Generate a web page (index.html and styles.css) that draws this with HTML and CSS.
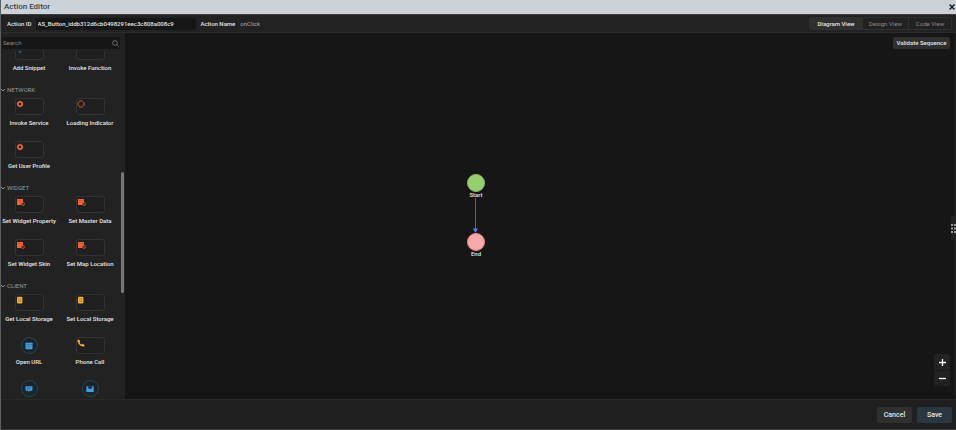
FILE: index.html
```html
<!DOCTYPE html>
<html lang="en">
<head>
<meta charset="utf-8">
<title>Action Editor</title>
<link rel="stylesheet" href="styles.css">
</head>
<body>
<svg class="defs" aria-hidden="true">
  <symbol id="chevron" viewBox="0 0 6 6"><path d="M0 2l2 2 2-2" fill="none" stroke="#999" stroke-width=".9"/></symbol>
  <symbol id="gear" viewBox="0 0 8 8"><circle cx="4" cy="4" r="2.1" fill="none" stroke="#f0693a" stroke-width="1.5"/><circle cx="4" cy="4" r="2.9" fill="none" stroke="#f0693a" stroke-width=".7" stroke-dasharray="1.2 1.08"/></symbol>
  <symbol id="spinner" viewBox="0 0 8 8"><circle cx="4" cy="4" r="3.1" fill="none" stroke="#e2602f" stroke-width="1" stroke-dasharray="2 .43"/></symbol>
  <symbol id="widget" viewBox="0 0 9 8"><path d="M1 1h6v6H1z" fill="#f0632f"/><path d="M1 2.500h6" stroke="#b94b25" stroke-width=".4"/><circle cx="7" cy="6" r="1.600" fill="#57301f" stroke="#b94b25" stroke-width=".8"/></symbol>
  <symbol id="storage" viewBox="0 0 8 8"><rect x="1" y=".8" width="5.400" height="6.800" rx="1" fill="#eeb040"/><path d="M2.200 2.800h3M2.200 4.200h3M2.200 5.600h3" stroke="#9b7128" stroke-width=".6"/></symbol>
  <symbol id="phone" viewBox="0 0 8 8"><path d="M.6 1.100 2 .4l1.300 2.100-.9 1c.5 1 1.200 1.700 2.200 2.200l1-.9 2 1.300-.6 1.300C4.500 8.200-.1 4.500.6 1.100z" fill="#fbb43c"/></symbol>
  <symbol id="browser" viewBox="0 0 8 8"><rect x=".5" y=".8" width="7" height="6.400" rx=".4" fill="#40a0df"/><path d="M.5 2.600h7M2 4.800h4" stroke="#235574" stroke-width=".6" stroke-dasharray="1 .4"/></symbol>
  <symbol id="chat" viewBox="0 0 8 8"><path d="M.6 1.200h6.800v4.600H4.800L3.500 7.300 3.300 5.800H.6z" fill="#40a0df"/><path d="M2 2.800h4M2 4.200h3" stroke="#1f4860" stroke-width=".6"/></symbol>
  <symbol id="mail" viewBox="0 0 8 8"><path d="M.3 1.200h7.400v5.800H.3z" fill="#40a0df"/><path d="M1.800 1.200h4.400v1.500L4 4.300 1.800 2.700z" fill="#1c2e3a"/></symbol>
  <symbol id="snippet" viewBox="0 0 8 8"><path d="M2 6.500l2 1.500 2-1.500z" fill="#3580b0"/></symbol>
</svg>
<div class="editor">
  <header class="titlebar">
    <h1>Action Editor</h1>
    <button class="close" aria-label="Close"><svg viewBox="0 0 6 6"><path d="M.6.600l4.800 4.800M5.400.6.6 5.400" stroke="#15191c" stroke-width="1.400"/></svg></button>
  </header>
  <div class="toolbar">
    <label for="action-id">Action ID</label>
    <input id="action-id" class="action-id" value="AS_Button_iddb312d6cb0498291eec3c808a008c9">
    <span class="name-label">Action Name</span>
    <span class="name-value">onClick</span>
    <div class="views">
      <button class="active">Diagram View</button>
      <button>Design View</button>
      <button>Code View</button>
    </div>
  </div>
  <main class="workspace">
    <aside class="palette">
      <div class="search">
        <input type="search" aria-label="Search" placeholder="Search">
        <svg viewBox="0 0 7 7"><circle cx="3" cy="3" r="2.400" fill="none" stroke="#888" stroke-width=".7"/><path d="M4.800 4.800l2 2" stroke="#888" stroke-width=".7"/></svg>
      </div>
      <div class="list">
        <section class="scrolled">
          <div class="grid">
            <div class="tile"><span class="box"><svg><use href="#snippet"/></svg></span><span>Add Snippet</span></div>
            <div class="tile"><span class="box"></span><span>Invoke Function</span></div>
          </div>
        </section>
        <section>
          <h2><svg><use href="#chevron"/></svg>NETWORK</h2>
          <div class="grid">
            <div class="tile"><span class="box"><svg><use href="#gear"/></svg></span><span>Invoke Service</span></div>
            <div class="tile"><span class="box"><svg><use href="#spinner"/></svg></span><span>Loading Indicator</span></div>
            <div class="tile"><span class="box"><svg><use href="#gear"/></svg></span><span>Get User Profile</span></div>
          </div>
        </section>
        <section>
          <h2><svg><use href="#chevron"/></svg>WIDGET</h2>
          <div class="grid">
            <div class="tile"><span class="box"><svg class="wide"><use href="#widget"/></svg></span><span>Set Widget Property</span></div>
            <div class="tile"><span class="box"><svg class="wide"><use href="#widget"/></svg></span><span>Set Master Data</span></div>
            <div class="tile"><span class="box"><svg class="wide"><use href="#widget"/></svg></span><span>Set Widget Skin</span></div>
            <div class="tile"><span class="box"><svg class="wide"><use href="#widget"/></svg></span><span>Set Map Location</span></div>
          </div>
        </section>
        <section>
          <h2><svg><use href="#chevron"/></svg>CLIENT</h2>
          <div class="grid">
            <div class="tile"><span class="box"><svg><use href="#storage"/></svg></span><span>Get Local Storage</span></div>
            <div class="tile"><span class="box"><svg><use href="#storage"/></svg></span><span>Set Local Storage</span></div>
            <div class="tile"><span class="box round"><svg><use href="#browser"/></svg></span><span>Open URL</span></div>
            <div class="tile"><span class="box"><svg><use href="#phone"/></svg></span><span>Phone Call</span></div>
            <div class="tile"><span class="box round"><svg><use href="#chat"/></svg></span></div>
            <div class="tile"><span class="box round"><svg><use href="#mail"/></svg></span></div>
          </div>
        </section>
      </div>
      <div class="thumb"></div>
    </aside>
    <div class="canvas">
      <button class="validate">Validate Sequence</button>
      <div class="flow">
        <div class="node start"></div>
        <span>Start</span>
        <svg class="arrow" viewBox="0 0 8 35"><path d="M3.500 0v31" stroke="#4067b5" stroke-width="1"/><path d="M1 30.500h5L3.500 35z" fill="#4a86f2"/></svg>
        <div class="node end"></div>
        <span>End</span>
      </div>
      <div class="handle"><svg viewBox="0 0 5 9"><path d="M0 1h2M3 1h2M0 4.500h2M3 4.500h2M0 8h2M3 8h2" stroke="#999" stroke-width="1.800"/></svg></div>
      <div class="zoom">
        <button aria-label="Zoom in"><svg viewBox="0 0 7 7"><path d="M3.500 0v7M0 3.500h7" stroke="#fff" stroke-width="1.300"/></svg></button>
        <button aria-label="Zoom out"><svg viewBox="0 0 7 7"><path d="M0 3.500h7" stroke="#fff" stroke-width="1.300"/></svg></button>
      </div>
    </div>
  </main>
  <footer class="actions">
    <button>Cancel</button>
    <button class="save">Save</button>
  </footer>
</div>
</body>
</html>
```
FILE: styles.css
```css
* { box-sizing: border-box; }
body {
  margin: 0;
  background: #212121;
  color: #e4e4e4;
  font: 500 6px/10px Roboto, "Liberation Sans", sans-serif;
}
button, input { font: inherit; color: inherit; border: 0; padding: 0; margin: 0; }
h1, h2 { margin: 0; }
svg { display: block; flex: none; }
.defs { position: absolute; width: 0; height: 0; }
.editor {
  display: flex;
  flex-direction: column;
  height: 100vh;
  border-left: 1px solid #5c5e5f;
}
.titlebar {
  display: flex;
  align-items: center;
  justify-content: space-between;
  flex: none;
  height: 14px;
  padding: 0 1px 0 3px;
  background: #ccd2d7;
}
.titlebar h1 { color: #3b4044; font-size: 8px; font-weight: 500; }
.close { background: none; }
.close svg { width: 6px; height: 6px; }
.toolbar {
  display: flex;
  align-items: center;
  flex: none;
  height: 19px;
  padding: 0 4px 0 6px;
  background: #222;
  border-top: 1px solid #3c3d3e;
  border-bottom: 1px solid #2b2b2b;
}
.action-id {
  width: 160px;
  height: 12px;
  margin: 0 5px 0 4px;
  padding: 0 2px;
  background: #161616;
  border-radius: 2px;
}
.name-value { margin-left: 5px; color: #aaa; font-weight: 400; }
.views {
  display: flex;
  margin-left: auto;
  border: 1px solid #303030;
  border-radius: 2px;
}
.views button {
  width: 43px;
  height: 11px;
  background: #212121;
  color: #888;
  font-weight: 400;
}
.views button + button { border-left: 1px solid #303030; width: 46px; }
.views .active { width: 52px; background: #2f2f2f; color: #e4e4e4; font-weight: 500; }
.views button:last-child { width: 43px; }
.workspace { display: flex; flex: 1; min-height: 0; }
.palette {
  position: relative;
  display: flex;
  flex-direction: column;
  flex: none;
  width: 124px;
  padding-top: 4px;
  background: #222;
}
.search {
  display: flex;
  align-items: center;
  flex: none;
  height: 12px;
  margin: 0 5px 2px 1px;
  padding: 0 1px;
  background: #161616;
  border-radius: 2px;
}
.search input { flex: 1; min-width: 0; background: none; font-weight: 400; appearance: none; }
.search input::placeholder { color: #8a8a8a; }
.search svg { width: 7px; height: 7px; }
.list { flex: 1; min-height: 0; overflow: hidden; }
section { margin-bottom: 11px; }
.scrolled { margin-top: -8px; }
h2 {
  display: flex;
  align-items: center;
  height: 12px;
  margin-bottom: 2px;
  color: #999;
  font-size: 6px;
  font-weight: 400;
}
h2 svg { width: 6px; height: 6px; }
.grid { display: grid; grid-template-columns: 56px 56px; gap: 13px 5px; }
.tile {
  display: flex;
  flex-direction: column;
  align-items: center;
  gap: 3px;
  white-space: nowrap;
}
.box {
  width: 29px;
  height: 17px;
  padding: 1px 0;
  background: #1f1f1f;
  border: 1px solid #333;
  border-radius: 3px;
}
.box svg { width: 8px; height: 8px; }
.box .wide { width: 9px; }
.round {
  display: grid;
  place-items: center;
  width: 17px;
  background: #1c242a;
  border-color: #264558;
  border-radius: 50%;
}
.thumb {
  position: absolute;
  top: 38%;
  right: 1px;
  width: 3px;
  height: 33%;
  border-radius: 2px;
  background: #777;
}
.canvas {
  position: relative;
  flex: 1;
  background: #161616;
  border-right: 1px solid #222;
}
.validate {
  position: absolute;
  top: 4px;
  right: 5px;
  width: 57px;
  height: 12px;
  background: #2f2f2f;
  border-radius: 2px;
}
.flow {
  position: absolute;
  top: 141px;
  left: 341px;
  display: flex;
  flex-direction: column;
  align-items: center;
  width: 20px;
  line-height: 6px;
}
.node { width: 18px; height: 18px; border-radius: 50%; border: 1px solid; }
.start { background: #95cf6f; border-color: #86bd63; }
.end { background: #f5a9a9; border-color: #ed8585; }
.arrow { width: 8px; height: 35px; }
.handle {
  position: absolute;
  top: 183px;
  right: -1px;
  display: flex;
  align-items: center;
  width: 5px;
  height: 24px;
  background: #222;
}
.handle svg { width: 5px; height: 9px; }
.zoom {
  position: absolute;
  right: 5px;
  bottom: 13px;
  width: 16px;
  border-radius: 3px;
  background: #222;
}
.zoom button {
  display: grid;
  place-items: center;
  width: 16px;
  height: 16px;
  background: none;
}
.zoom button + button { border-top: 1px solid #181818; }
.zoom svg { width: 7px; height: 7px; }
.actions {
  display: flex;
  align-items: center;
  justify-content: flex-end;
  gap: 5px;
  flex: none;
  height: 31px;
  padding-right: 4px;
  background: #1f1f1f;
  border-top: 1px solid #292929;
  border-bottom: 1px solid #3c3c3c;
}
.actions button {
  width: 35px;
  height: 16px;
  background: #303030;
  border-radius: 2px;
  font-size: 7px;
}
.actions .save { background: #2a3741; }
```
